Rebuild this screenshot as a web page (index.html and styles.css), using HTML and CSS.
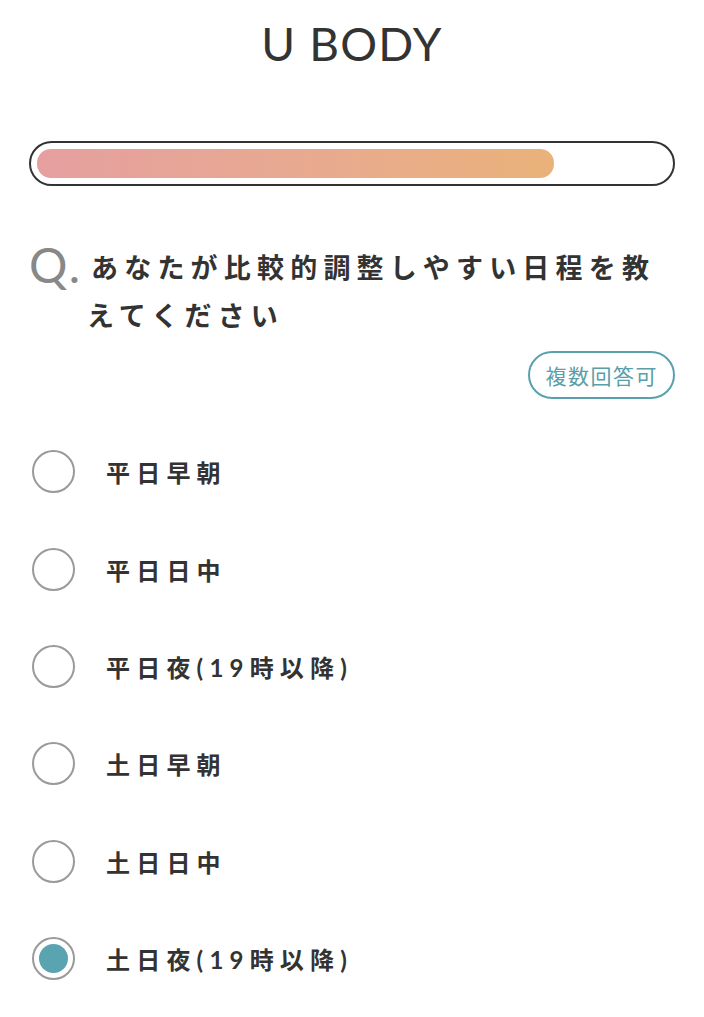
FILE: index.html
```
<!DOCTYPE html>
<html lang="ja">
<head>
<meta charset="utf-8">
<link rel="stylesheet" href="styles.css">
</head>
<body>
<div class="page">
  <h1 class="logo">U BODY</h1>
  <div class="progress"><div class="progress-fill" style="width:82%"></div></div>
  <div class="question">
    <span class="q-mark">Q.</span>
    <p class="q-text">あなたが比較的調整しやすい日程を教えてください</p>
  </div>
  <div class="badge-row"><span class="badge">複数回答可</span></div>
  <ul class="options">
    <li class="option"><span class="radio"></span><span class="label">平日早朝</span></li>
    <li class="option"><span class="radio"></span><span class="label">平日日中</span></li>
    <li class="option"><span class="radio"></span><span class="label">平日夜(19時以降)</span></li>
    <li class="option"><span class="radio"></span><span class="label">土日早朝</span></li>
    <li class="option"><span class="radio"></span><span class="label">土日日中</span></li>
    <li class="option selected"><span class="radio"></span><span class="label">土日夜(19時以降)</span></li>
  </ul>
</div>
</body>
</html>
```
FILE: styles.css
```
* { box-sizing: border-box; }
html, body { margin: 0; padding: 0; background: #fff; }
body { font-family: Lato, "Noto Sans CJK JP", sans-serif; color: #333; }
.page { padding: 0 29px; }
.logo {
  margin: 0;
  padding-top: 18px;
  height: 141px;
  text-align: center;
  font-family: Lato, sans-serif;
  font-weight: 400;
  font-size: 46px;
  line-height: 52px;
  letter-spacing: 1.2px;
  color: #333;
}
.progress {
  height: 45px;
  border: 2px solid #333;
  border-radius: 23px;
  padding: 6px;
}
.progress-fill {
  height: 100%;
  border-radius: 14px;
  background: linear-gradient(90deg, #e59f9f 0%, #e8a991 50%, #eab27a 100%);
}
.question {
  display: flex;
  align-items: flex-start;
  margin-top: 58px;
}
.q-mark {
  flex: none;
  width: 60px;
  font-family: Lato, sans-serif;
  font-size: 48px;
  line-height: 48px;
  letter-spacing: 2.5px;
  color: #888;
  font-weight: 400;
  margin-top: -3px;
}
.q-text {
  margin: 0;
  font-size: 27px;
  font-weight: 700;
  line-height: 48px;
  letter-spacing: 6.2px;
  color: #333;
  text-indent: 4px;
  margin-left: -2px;
}
.badge-row {
  display: flex;
  justify-content: flex-end;
  margin-top: 11px;
}
.badge {
  display: inline-flex;
  align-items: center;
  justify-content: center;
  height: 48px;
  padding: 0 15px 0 16px;
  border: 2px solid #5aa1ae;
  border-radius: 24px;
  color: #5a9ea9;
  font-size: 21px;
  letter-spacing: 1.5px;
}
.options {
  list-style: none;
  margin: 24px 0 0;
  padding: 0;
}
.option {
  display: flex;
  align-items: center;
  height: 97.4px;
}
.radio {
  flex: none;
  width: 43px;
  height: 43px;
  margin-left: 3px;
  border: 2px solid #9a9a9a;
  border-radius: 50%;
  display: flex;
  align-items: center;
  justify-content: center;
}
.option.selected .radio::after {
  content: "";
  width: 29px;
  height: 29px;
  border-radius: 50%;
  background: #5aa3b1;
}
.label {
  margin-left: 31px;
  font-size: 24px;
  font-weight: 700;
  letter-spacing: 6.2px;
  color: #333;
}
```
